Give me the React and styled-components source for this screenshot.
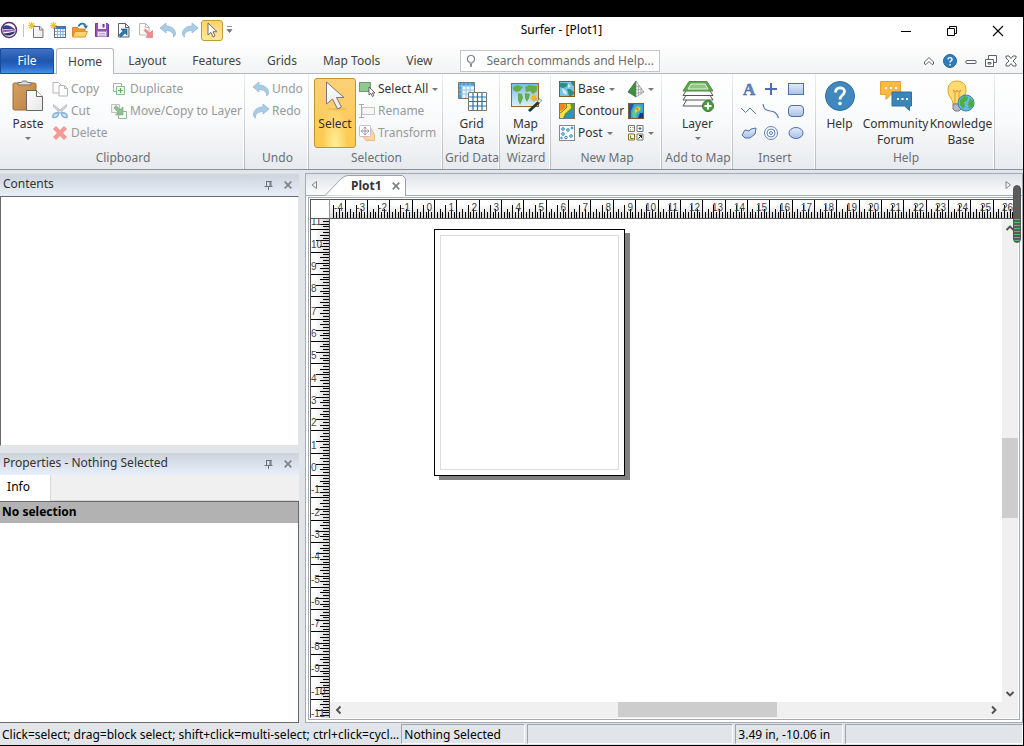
import React, { useLayoutEffect, useRef, useState } from "react";
import styled, { createGlobalStyle, css } from "styled-components";

const UI_FONT = `"Noto Sans", "Open Sans", sans-serif`;

/* ---------- icons ---------- */

const art = {
  logo: [18, <>
    <circle cx="9" cy="9" r="7.500" fill="#fff" stroke="#5b2c77" strokeWidth="1.500" />
    <path d="M3 5.500C6 3 11 4 15.500 9.200 11 8 7 7.500 3 8.500z" fill="#3b3f8f" />
    <path d="M2.500 9.500C7 8 11 8.500 15.500 10 11 10.200 6 11 3 11.500z" fill="#a05fb0" />
    <path d="M3 12.500c4-.2 8-1.200 12.300-2.200C14 14 7 16.500 3 12.500z" fill="#2d336f" />
  </>],
  newPlot: [16, <>
    <path d="M5.500 4.500h6.500l3 3v8h-9.500z" fill="url(#paper)" stroke="#777" />
    <path d="M11.500 4.500v3.500h3.500" fill="none" stroke="#777" />
    <path d="M3.500 0v7M0 3.500h7M1 1l5 5M6 1L1 6" stroke="#e8c51f" strokeWidth="1.200" />
  </>],
  newSheet: [16, <>
    <rect x="4.500" y="4.500" width="11" height="11" fill="#fff" stroke="#55708c" />
    <path d="M5 5h10v2H5z" fill="#3d7cb5" />
    <path d="M5 9.500h10M5 12.500h10M7.500 7v8M10.500 7v8M13 7v8" stroke="#7fb0dc" />
    <path d="M3.500 0v7M0 3.500h7M1 1l5 5M6 1L1 6" stroke="#e8c51f" strokeWidth="1.200" />
  </>],
  open: [16, <>
    <path d="M.5 14.500v-9h5l1.500 1.500h6v7.500z" fill="#e89b2c" stroke="#d8871b" />
    <path d="M.7 15l2.500-5.500h12.300L13 15z" fill="#ffd36e" stroke="#de9427" />
    <path d="M6.500 4.500C8 .8 12 .8 13.500 3.500" fill="none" stroke="#2372b0" strokeWidth="1.800" />
    <path d="M11 3.500h5L14 7z" fill="#2372b0" />
  </>],
  save: [16, <>
    <path d="M1.500 1.500h12l1 1v12h-13z" fill="#9252b5" stroke="#713894" />
    <path d="M4 1h8v6H4z" fill="#f7f3fa" />
    <path d="M8.500 2h2v3.500h-2z" fill="#713894" />
    <path d="M3.500 9.500h9v5h-9z" fill="#eee4f3" stroke="#b991cf" />
    <path d="M5 11.500h6M5 13.200h6" stroke="#ad8ac1" strokeWidth=".7" />
  </>],
  importFile: [16, <>
    <path d="M2.500 1.500h7l3.500 3.500v10H2.500z" fill="url(#paper)" stroke="#59636c" />
    <path d="M9.500 1.500v4h3.500" fill="none" stroke="#59636c" />
    <path d="M5 7h6v6L9 11l-4 4-2-2 4-4z" fill="#2d77ae" stroke="#1c5a8b" strokeWidth=".6" />
  </>],
  exportFile: [16, <>
    <path d="M1.500 1.500h6l3.500 3.500v8H1.500z" fill="#fbfbfb" stroke="#b9b9b9" />
    <path d="M7.500 1.500v4H11" fill="none" stroke="#b9b9b9" />
    <path d="M6 8.500L7.500 7l4 4L14.500 8.500v7H8l2-3z" fill="#f08a8a" stroke="#dc7070" strokeWidth=".6" />
  </>],
  undo: [16, <>
    <path d="M0 6l6-5v3c5.500 0 9.500 3 9.500 8-.3 1.500-1 2.500-2 3 .5-4-2.500-6.500-7.500-6.500V11z" fill="#a9cce5" stroke="#8ab5d6" strokeWidth=".7" />
  </>],
  redo: [16, <>
    <path d="M16 6l-6-5v3C4.500 4 .5 7 .5 12c.3 1.500 1 2.500 2 3-.5-4 2.500-6.500 7.500-6.500V11z" fill="#a9cce5" stroke="#8ab5d6" strokeWidth=".7" />
  </>],
  pointer: [16, <path d="M4 1v12l3-2.600 2 4.600 2-1-2-4.300h4z" fill="#fff" stroke="#6f6f6f" />],
  search: [14, <>
    <circle cx="7" cy="5" r="3.500" fill="#fff" stroke="#7a8087" strokeWidth="1.200" />
    <path d="M6 8.500L7 13l1-4.500" fill="#fff" stroke="#7a8087" />
  </>],
  copy: [16, <>
    <path d="M1 1.500h5.500l2.500 2.500v8H1z" fill="#fcfcfc" stroke="#b7b7b7" />
    <path d="M7 4.500h5.500l3 3v7.500H7z" fill="#fcfcfc" stroke="#b7b7b7" />
    <path d="M12.500 4.500v3h3" fill="none" stroke="#b7b7b7" />
  </>],
  cut: [16, <>
    <path d="M1.500 1.500l10 8.500-1.300 1.500L1.500 4zM14.500 1.500l-10 8.500 1.300 1.500L14.500 4z" fill="#cfd2d5" stroke="#adb1b5" strokeWidth=".6" />
    <path d="M1 14.500c-1-3 2-5 5.500-4.500.5 2.500-2 5-5.500 4.500zM15 14.500c1-3-2-5-5.500-4.500-.5 2.500 2 5 5.500 4.500z" fill="#d9eafa" stroke="#86b3dc" strokeWidth="1.600" />
  </>],
  remove: [16, <path d="M1.500 4l2.500-2.500 4 4 4-4L14.500 4l-4 4 4 4-2.500 2.500-4-4-4 4L1.500 12l4-4z" fill="#f59a94" stroke="#e98079" strokeWidth=".7" />],
  duplicate: [16, <>
    <path d="M2.500 10.500v-8h8v3M2.500 10.500h3" fill="none" stroke="#b0b0b0" />
    <path d="M5.500 5.500h8v8h-8z" fill="#f3faf2" stroke="#8cbd8a" />
    <path d="M9.500 7v5M7 9.500h5" stroke="#65aa62" strokeWidth="1.200" />
  </>],
  moveLayer: [16, <>
    <path d="M.5 1.500h8v8h-8z" fill="#f2f2f2" stroke="#c2c2c2" />
    <path d="M9.500 8.500h6v7h-8v-3" fill="#fff" stroke="#8cbd8a" />
    <path d="M3 5l2-2.500L9 6.500 12 4v8H4.500L7 9z" fill="#91be91" stroke="#73a773" strokeWidth=".6" />
  </>],
  selectAll: [16, <>
    <rect x=".5" y="1.500" width="11" height="9" fill="#90c990" stroke="#244a24" strokeDasharray="1 1" />
    <path d="M10 6v8l2-1.700 1.300 3.200 1.500-.8-1.300-2.700H16z" fill="#fff" stroke="#444" strokeWidth=".8" />
  </>],
  rename: [16, <>
    <path d="M3 4.500h12.500v7H3z" fill="#f7f7f7" stroke="#c3c3c3" />
    <path d="M0 1.500h5M0 14.500h5M2.500 1.500v13" fill="none" stroke="#aaa" />
  </>],
  transform: [16, <>
    <path d="M12 3.500l3.500 6v6H7l-3-4z" fill="#ffd6a3" stroke="#edb978" />
    <rect x=".5" y=".5" width="11" height="11" rx="1" fill="#fff" stroke="#c1c1c1" />
    <path d="M6 2v8M2 6h8M4.500 3.500L6 2l1.500 1.500M4.500 8.500L6 10l1.500-1.500M3.500 4.500L2 6l1.500 1.500M8.500 4.500L10 6 8.500 7.500" fill="none" stroke="#999" />
  </>],
  base: [16, <>
    <rect x=".5" y=".5" width="15" height="15" fill="#74c3ea" stroke="#875a2a" />
    <path d="M1 2h6l2 1-2 3-3 1-3-1zM8 8h3l4 3v2l-3 2h-2l-1-4zM12 1h3v4l-2-1z" fill="#2f8f70" />
    <path d="M3 7l4 3 1 4-4-2zM9 3l3 2-3 2z" fill="#d5f0f8" />
  </>],
  contour: [16, <>
    <rect x=".5" y=".5" width="15" height="15" fill="#2c8fd0" stroke="#777" />
    <path d="M1 1h13v5l-6 5-3 4H1z" fill="#6cc04a" />
    <path d="M1 1h10l1 4-6 5-2 5H1z" fill="#fddf3d" />
    <path d="M1 1h5l1 3-3 3-3 1z" fill="#f0851f" />
    <path d="M7 1l1 3-4 4-3 2M13 1l0 5-6 5-2 4" fill="none" stroke="#50602a" strokeWidth=".8" />
  </>],
  post: [16, <>
    <rect x=".5" y=".5" width="15" height="15" fill="#fff" stroke="#888" />
    <g fill="none" stroke="#257eb8">
      <circle cx="4" cy="4" r="1.300" /><circle cx="9" cy="5" r="1.300" /><circle cx="13" cy="3" r="1" />
      <circle cx="4" cy="9" r="1.300" /><circle cx="7" cy="12.500" r="1.300" /><circle cx="12" cy="11" r="1.300" /><circle cx="2.500" cy="13" r=".8" />
    </g>
  </>],
  surface: [16, <>
    <path d="M8 0L0 11l8 5z" fill="#3f9140" stroke="#246a2a" strokeWidth=".7" />
    <path d="M8 0l8 11-8 5z" fill="#f5f5f5" stroke="#8d8d8d" strokeWidth=".7" />
    <path d="M8 5l4 1M8 9l6-1M8 12.500l8-2M10.500 4v10.500M13 7v6" stroke="#999" strokeWidth=".7" />
  </>],
  colorRelief: [16, <>
    <rect x=".5" y=".5" width="15" height="15" fill="#3f9fd4" stroke="#875a2a" />
    <path d="M1 1h5L3 8v7H1z" fill="#2656a1" />
    <path d="M5 15c-2-5 0-10 4-12s5 2 4 4-4 2-5 8z" fill="#63c58d" />
    <path d="M7 9c0-5 5-6 5-3 0 2-4 1-5 5z" fill="#eadc42" />
    <circle cx="9.500" cy="6" r="1.300" fill="#ed7e27" />
    <path d="M12 10h3v5h-5z" fill="#173b82" />
  </>],
  specialty: [16, <>
    <g fill="#fff" stroke="#777">
      <path d="M.5.5h6v6h-6zM9 .5h6v6H9zM9 9h6v6H9z" />
      <path d="M.5 9h6v6h-6z" stroke="#9a651e" />
    </g>
    <path d="M2 2h1v1H2zM4.500 2h1v1h-1zM2 4.500h1v1H2z" fill="#4b8e36" />
    <path d="M4.500 4.500h1v1h-1z" fill="#ea8e19" />
    <path d="M12 2v3M10.500 3.500h3" stroke="#3d66a5" />
    <path d="M2.500 10.500v3h3" fill="none" stroke="#479149" />
    <path d="M10.500 13.500l3-3M11 10.500h2.500V13" fill="none" stroke="#222" />
  </>],
  text: [16, <text x="2" y="14" fontFamily="Liberation Serif, serif" fontWeight="bold" fontSize="17" fill="#6587c0" stroke="#3b61a4" strokeWidth=".5">A</text>],
  plus: [16, <path d="M8 2v12M2 8h12" stroke="#4e6fa9" strokeWidth="2" />],
  rect: [16, <rect x=".5" y="2.500" width="15" height="11" fill="url(#shape)" stroke="#4e6fa9" />],
  zigzag: [16, <path d="M0 5l4.500 4.500L9 5l6 6" fill="none" stroke="#5577ae" />],
  spline: [16, <path d="M0 1c1 6 3 6 7 7 4 0 7 2 8.500 7" fill="none" stroke="#5577ae" strokeWidth="1.200" />],
  roundRect: [16, <rect x=".5" y="2.500" width="15" height="11" rx="3.500" fill="url(#shape)" stroke="#4e6fa9" />],
  polygon: [16, <path d="M1 10l3-5 4 1 2-2 5-1-1 6-5 4H4z" fill="url(#shape)" stroke="#4e6fa9" />],
  target: [16, <g fill="none" stroke="#6486bd"><circle cx="8" cy="8" r="6.500" /><circle cx="8" cy="8" r="4" /><circle cx="8" cy="8" r="1.500" /></g>],
  ellipse: [16, <ellipse cx="8" cy="8" rx="7" ry="5.500" fill="url(#shape)" stroke="#4e6fa9" />],
  paste: [32, <>
    <rect x="1" y="3" width="23" height="27" rx="1.500" fill="url(#board)" stroke="#9c6c30" />
    <path d="M6 5V2.500h3.500L10.500 1h4l1 1.500H19V5z" fill="#d8d8d8" stroke="#757575" />
    <path d="M14.500 10.500h10l6 6v14h-16z" fill="url(#paper)" stroke="#666" />
    <path d="M24.500 10.500v6h6" fill="#fff" stroke="#666" />
  </>],
  bigPointer: [32, <>
    <ellipse cx="18" cy="29" rx="10" ry="1.500" fill="#cf9b22" opacity=".3" />
    <path d="M7.500 2v22l6-5 5 10 4-2-5-9.500h7.500z" fill="url(#paper)" stroke="#777" />
  </>],
  gridData: [32, <>
    <path d="M2.500 2.500h16v16h-16z" fill="#eaf5fd" stroke="#777" />
    <path d="M3 3h15v3H3zM3 3h3v15H3z" fill="#4d9bd3" />
    <path d="M3 6h15M3 10h15M3 14h15M6 3v15M10 3v15M14 3v15" stroke="#8dc6ed" />
    <path d="M12.500 12.500h18v18h-18z" fill="#fff" stroke="#777" />
    <path d="M13 17h17M13 21.500h17M13 26h17M17 13v17M21.500 13v17M26 13v17" stroke="#2473aa" strokeWidth="1.200" />
  </>],
  mapWizard: [32, <>
    <rect x="1.500" y="3.500" width="27" height="23" fill="url(#sea)" stroke="#9b6428" />
    <path d="M3 7l4-2 6 2-3 4-4 1-3-2zM8 13l4 1 1 4-3 7-2-5zM15 7l4-2 8 1v5l-4 3-3-3-4 1zM15 13l5 1-1 4-2 4-2-4zM23 17l4 1-1 3z" fill="#66ad49" />
    <path d="M24 14v8M20 18h8M21.500 15.500l5 5M26.500 15.500l-5 5" stroke="#f5ae2a" strokeWidth="1.200" />
    <path d="M18 30l10-9 2 2-10 9z" fill="#303030" />
    <path d="M27 21l3-2.500 2 2-3 2.500z" fill="#ddd" stroke="#555" strokeWidth=".5" />
  </>],
  layer: [32, <>
    <path d="M7 16h18l6 10H1z" fill="#fafafa" stroke="#555" />
    <path d="M7 11h18l6 9H1z" fill="#fff" stroke="#555" />
    <path d="M7 6.500h18l6 9H1z" fill="#fff" stroke="#555" />
    <path d="M7 1.500h18l6 9.500H1z" fill="#5fa64d" stroke="#4b8f42" />
    <path d="M6 9L9 4h14l3 5z" fill="#8fc77d" stroke="#e7f5e3" />
    <circle cx="26" cy="26" r="5.500" fill="#4f9a41" stroke="#347b2f" />
    <path d="M26 22.500v7M22.500 26h7" stroke="#fff" strokeWidth="2" />
  </>],
  bigHelp: [32, <>
    <circle cx="16" cy="16" r="14.500" fill="#4089bf" stroke="#2d6c9f" />
    <path d="M11.500 12.500c0-6 9-6 9-1 0 4-4.500 3.500-4.500 8" fill="none" stroke="#fff" strokeWidth="2.700" />
    <circle cx="16" cy="23.500" r="1.800" fill="#fff" />
  </>],
  community: [32, <>
    <path d="M.5 1.500h20v13H11l-5 5v-5H.5z" fill="#f9b946" stroke="#e6a02b" />
    <path d="M5 8h2M10 8h2M15 8h2" stroke="#fff" strokeWidth="2" />
    <path d="M12 12h19.500v14h-2v4.500l-5-4.500H12z" fill="#3c85b8" stroke="#2c719f" />
    <path d="M17 19h2M21.500 19h2M26 19h2" stroke="#fff" strokeWidth="2" />
  </>],
  knowledge: [32, <>
    <path d="M8 24c0-5-5-7-5-14C3 4 7 1 12 1s9 3 9 9c0 7-5 9-5 14z" fill="#fddb70" stroke="#dfa226" />
    <path d="M10 23V13l-2-3 3 2 1-2 1 2 3-2-2 3v10" fill="none" stroke="#e5942d" />
    <path d="M8 24h8v5l-2 2h-4l-2-2z" fill="#b5bbc1" stroke="#757b82" />
    <circle cx="21" cy="23" r="8" fill="#65b9ea" stroke="#347fae" />
    <path d="M15 20l4-4 4 1-1 4-3 1 1 4-2 3-3-4zM25 18l3 3v5l-4 3-1-5z" fill="#4faf3c" />
  </>],
  help: [14, <>
    <circle cx="7" cy="7" r="6.500" fill="#2e7cb9" stroke="#23689e" />
    <path d="M5 5.500c0-2.500 4-2.500 4 0C9 7 7 6.700 7 8.500M7 10v1.500" fill="none" stroke="#fff" strokeWidth="1.400" />
  </>],
  collapse: [12, <path d="M1.500 7L6 2.500 10.500 7v2L9 9.500l-3-3-3 3L1.500 9z" fill="#fff" stroke="#5b6069" />],
  docMin: [12, <rect x="1" y="5.500" width="10" height="3" rx=".5" fill="#fff" stroke="#5b6069" />],
  docRestore: [12, <>
    <path d="M3.500.5h8v7h-8z" fill="#fff" stroke="#5b6069" />
    <path d="M.5 4.500h8v7h-8zM3 7.500h3v1.500H3z" fill="#fff" stroke="#5b6069" />
  </>],
  docClose: [12, <path d="M1 1h3l2 2.500L8 1h3v2L8 6l3 3v2H8L6 8.500 4 11H1V9l3-3-3-3z" fill="#fff" stroke="#5b6069" />],
  winMin: [12, <path d="M1 6.500h10" stroke="#000" />],
  winRestore: [12, <path d="M3.500 3.500v-2h7v7h-2M1.500 3.500h7v7h-7z" fill="none" stroke="#000" />],
  winClose: [12, <path d="M1 1l10 10M11 1L1 11" stroke="#000" strokeWidth="1.100" />],
  pin: [10, <path d="M3.500 1v5M8 1v5M3 1.500h5.500M7 1v5M1.500 6.500h8M5.500 7v3" fill="none" stroke="#6d7075" />],
  cross: [10, <path d="M1.700 1.700l6.600 6.600M8.300 1.700L1.700 8.300" stroke="#808388" strokeWidth="1.700" />],
  triLeft: [8, <path d="M5.500.5v7L1 4z" fill="none" stroke="#888" />],
  triRight: [8, <path d="M2 .5v7L6.500 4z" fill="none" stroke="#888" />],
  chevUp: [10, <path d="M1.500 7L5 3.500 8.500 7" fill="none" stroke="#505050" strokeWidth="1.900" />],
  chevDown: [10, <path d="M1.500 3L5 6.500 8.500 3" fill="none" stroke="#505050" strokeWidth="1.900" />],
  chevLeft: [10, <path d="M6.500 1.500L3 5l3.500 3.500" fill="none" stroke="#505050" strokeWidth="1.900" />],
  chevRight: [10, <path d="M3 1.500L6.500 5 3 8.500" fill="none" stroke="#505050" strokeWidth="1.900" />],
  qatMenu: [8, <path d="M1 .5h5M1 3.500h5L3.500 6.500z" fill="#777" stroke="#777" strokeWidth=".8" />],
};

const Svg = styled.svg`
  display: block;
  flex: none;
  overflow: visible;
`;

const Icon = ({ name }) => {
  const [size, shape] = art[name];
  return (
    <Svg width={size} height={size} viewBox={`0 0 ${size} ${size}`} aria-hidden="true">
      {shape}
    </Svg>
  );
};

const Gradients = () => (
  <HiddenSvg aria-hidden="true">
    <defs>
      <linearGradient id="paper" x1="0" y1="0" x2="1" y2="1">
        <stop offset="0" stopColor="#ffffff" />
        <stop offset="1" stopColor="#e6e6e6" />
      </linearGradient>
      <linearGradient id="shape" x1="0" y1="0" x2="0" y2="1">
        <stop offset="0" stopColor="#e4ecf9" />
        <stop offset="1" stopColor="#a9c0e6" />
      </linearGradient>
      <linearGradient id="board" x1="0" y1="0" x2="1" y2="1">
        <stop offset="0" stopColor="#d5a263" />
        <stop offset="1" stopColor="#b98140" />
      </linearGradient>
      <linearGradient id="sea" x1="0" y1="0" x2="0" y2="1">
        <stop offset="0" stopColor="#7fbbe9" />
        <stop offset="1" stopColor="#d9f0fb" />
      </linearGradient>
    </defs>
  </HiddenSvg>
);

/* ---------- rulers ---------- */

const INCH = 22.35;
const tickLength = [19, 7, 10, 7, 14, 7, 10, 7];

// eighth-inch marks that fit between start and end, measured from origin
const marksBetween = (origin, start, end) => {
  const marks = [];
  const first = Math.ceil(((start - origin) * 8) / INCH);
  const last = Math.floor(((end - origin) * 8) / INCH);
  for (let i = first; i <= last; i++) {
    marks.push({ i, at: Math.round(origin + (i * INCH) / 8), len: tickLength[((i % 8) + 8) % 8] });
  }
  return marks;
};

const useSize = () => {
  const ref = useRef(null);
  const [size, setSize] = useState({ width: 0, height: 0 });

  useLayoutEffect(() => {
    const measure = () => {
      const box = ref.current.getBoundingClientRect();
      setSize({ width: box.width, height: box.height });
    };
    measure();
    window.addEventListener("resize", measure);
    return () => window.removeEventListener("resize", measure);
  }, []);

  return [ref, size];
};

const HorizontalRuler = () => {
  const [ref, { width }] = useSize();
  const marks = marksBetween(104, 1, width - 1);
  return (
    <TopRuler ref={ref}>
      <path d={marks.map((m) => `M${m.at}.5 19v-${m.len}`).join("")} stroke="#000" />
      {marks.filter((m) => m.i % 8 === 0).map((m) => (
        <text key={m.i} x={m.at - 2} y="11" textAnchor="end">{m.i / 8}</text>
      ))}
    </TopRuler>
  );
};

const VerticalRuler = () => {
  const [ref, { height }] = useSize();
  const marks = marksBetween(256, 1, height - 1);
  return (
    <SideRuler ref={ref}>
      <path d={marks.map((m) => `M19 ${m.at}.5h-${m.len}`).join("")} stroke="#000" />
      {marks.filter((m) => m.i % 8 === 0).map((m) => (
        <text key={m.i} x="0" y={m.at - 4}>{-m.i / 8}</text>
      ))}
      <text x="0" y={Math.round(256 + 11 * INCH) - 4}>-11</text>
    </SideRuler>
  );
};

/* ---------- ribbon pieces ---------- */

const Small = ({ icon, label, disabled, menu }) => (
  <SmallButton disabled={disabled} aria-label={label || icon}>
    <Icon name={icon} />
    {label && <span>{label}</span>}
    {menu && <Caret />}
  </SmallButton>
);

const Large = ({ icon, lines, width, menu, active }) => (
  <LargeButton $width={width} $active={active}>
    <Icon name={icon} />
    <LargeText>
      {lines.map((line) => (
        <span key={line}>{line}</span>
      ))}
      {menu && <Caret />}
    </LargeText>
  </LargeButton>
);

const Group = ({ title, width, pad, children }) => (
  <RibbonGroup $width={width}>
    <GroupBody $pad={pad}>{children}</GroupBody>
    <GroupTitle>{title}</GroupTitle>
  </RibbonGroup>
);

const quickTools = ["newPlot", "newSheet", "open", "save", "importFile", "exportFile", "undo", "redo"];
const tabs = ["Home", "Layout", "Features", "Grids", "Map Tools", "View"];
const insertTools = ["text", "plus", "rect", "zigzag", "spline", "roundRect", "polygon", "target", "ellipse"];

const PanelHeader = ({ title }) => (
  <PanelBar>
    <PanelTitle>{title}</PanelTitle>
    <IconButton aria-label="Auto hide"><Icon name="pin" /></IconButton>
    <IconButton aria-label="Close panel"><Icon name="cross" /></IconButton>
  </PanelBar>
);

const App = () => {
  const [tab, setTab] = useState("Home");

  return (
    <Window>
      <GlobalStyle />
      <Gradients />

      <TitleBar>
        <QuickAccess>
          <Icon name="logo" />
          <QuickDivider />
          {quickTools.map((name) => (
            <QuickButton key={name} aria-label={name}><Icon name={name} /></QuickButton>
          ))}
          <QuickButton $active aria-label="pointer"><Icon name="pointer" /></QuickButton>
          <IconButton aria-label="Customize"><Icon name="qatMenu" /></IconButton>
        </QuickAccess>
        <Title>Surfer - [Plot1]</Title>
        <WindowButtons>
          <WindowButton aria-label="Minimize"><Icon name="winMin" /></WindowButton>
          <WindowButton aria-label="Restore"><Icon name="winRestore" /></WindowButton>
          <WindowButton aria-label="Close"><Icon name="winClose" /></WindowButton>
        </WindowButtons>
      </TitleBar>

      <TabBar>
        <FileTab>File</FileTab>
        {tabs.map((name) => (
          <Tab key={name} $active={name === tab} onClick={() => setTab(name)}>{name}</Tab>
        ))}
        <SearchBox>
          <Icon name="search" />
          <SearchInput aria-label="Search" placeholder="Search commands and Help..." />
        </SearchBox>
        <DocButtons>
          <IconButton aria-label="Collapse ribbon"><Icon name="collapse" /></IconButton>
          <IconButton aria-label="Help"><Icon name="help" /></IconButton>
          <IconButton aria-label="Minimize plot"><Icon name="docMin" /></IconButton>
          <IconButton aria-label="Restore plot"><Icon name="docRestore" /></IconButton>
          <IconButton aria-label="Close plot"><Icon name="docClose" /></IconButton>
        </DocButtons>
      </TabBar>

      <Ribbon>
        <Group title="Clipboard" width={245} pad={6}>
          <Large icon="paste" lines={["Paste"]} width={44} menu />
          <Stack $width={59} $indent={2}>
            <Small icon="copy" label="Copy" disabled />
            <Small icon="cut" label="Cut" disabled />
            <Small icon="remove" label="Delete" disabled />
          </Stack>
          <Stack>
            <Small icon="duplicate" label="Duplicate" disabled />
            <Small icon="moveLayer" label="Move/Copy to Layer" disabled />
          </Stack>
        </Group>
        <Group title="Undo" width={64} pad={8}>
          <Stack>
            <Small icon="undo" label="Undo" disabled />
            <Small icon="redo" label="Redo" disabled />
          </Stack>
        </Group>
        <Group title="Selection" width={134} pad={5}>
          <Large icon="bigPointer" lines={["Select"]} width={42} active />
          <Stack $indent={3}>
            <Small icon="selectAll" label="Select All" menu />
            <Small icon="rename" label="Rename" disabled />
            <Small icon="transform" label="Transform" disabled />
          </Stack>
        </Group>
        <Group title="Grid Data" width={57} pad={0}>
          <Large icon="gridData" lines={["Grid", "Data"]} width={57} />
        </Group>
        <Group title="Wizard" width={51} pad={0}>
          <Large icon="mapWizard" lines={["Map", "Wizard"]} width={51} />
        </Group>
        <Group title="New Map" width={111} pad={8}>
          <Stack $width={69}>
            <Small icon="base" label="Base" menu />
            <Small icon="contour" label="Contour" />
            <Small icon="post" label="Post" menu />
          </Stack>
          <Stack>
            <Small icon="surface" menu />
            <Small icon="colorRelief" />
            <Small icon="specialty" menu />
          </Stack>
        </Group>
        <Group title="Add to Map" width={71} pad={0}>
          <Large icon="layer" lines={["Layer"]} width={71} menu />
        </Group>
        <Group title="Insert" width={83} pad={8}>
          <ToolGrid>
            {insertTools.map((name) => (
              <Small key={name} icon={name} />
            ))}
          </ToolGrid>
        </Group>
        <Group title="Help" width={179} pad={0}>
          <Large icon="bigHelp" lines={["Help"]} width={47} />
          <Large icon="community" lines={["Community", "Forum"]} width={65} />
          <Large icon="knowledge" lines={["Knowledge", "Base"]} width={66} />
        </Group>
      </Ribbon>

      <Workspace>
        <SideColumn>
          <ContentsPanel>
            <PanelHeader title="Contents" />
            <ContentsTree />
          </ContentsPanel>
          <Panel>
            <PanelHeader title="Properties - Nothing Selected" />
            <PropertyTabs>
              <PropertyTab>Info</PropertyTab>
            </PropertyTabs>
            <PropertyList>
              <PropertyHeading>No selection</PropertyHeading>
            </PropertyList>
          </Panel>
        </SideColumn>

        <Document>
          <DocTabBar>
            <IconButton aria-label="Previous"><Icon name="triLeft" /></IconButton>
            <DocTab>
              <DocTabShape viewBox="0 0 82 21" aria-hidden="true">
                <path d="M0 20.500L17 3Q20 .5 23 .5H77.500l3 3V21" fill="#fff" stroke="#9aa1aa" />
              </DocTabShape>
              <DocTabName>Plot1</DocTabName>
              <IconButton aria-label="Close Plot1"><Icon name="cross" /></IconButton>
            </DocTab>
            <NextButton aria-label="Next"><Icon name="triRight" /></NextButton>
          </DocTabBar>
          <DocFrame>
            <RulerCorner />
            <HorizontalRuler />
            <VerticalRuler />
            <Canvas>
              <Page />
            </Canvas>
            <VScroll>
              <IconButton aria-label="Scroll up"><Icon name="chevUp" /></IconButton>
              <VTrack><VThumb /></VTrack>
              <IconButton aria-label="Scroll down"><Icon name="chevDown" /></IconButton>
            </VScroll>
            <HScroll>
              <IconButton aria-label="Scroll left"><Icon name="chevLeft" /></IconButton>
              <HTrack><HThumb /></HTrack>
              <IconButton aria-label="Scroll right"><Icon name="chevRight" /></IconButton>
            </HScroll>
          </DocFrame>
          <LevelMeter />
        </Document>
      </Workspace>

      <StatusBar>
        <StatusHint>Click=select; drag=block select; shift+click=multi-select; ctrl+click=cycl...</StatusHint>
        <StatusCell $width={124}>Nothing Selected</StatusCell>
        <StatusCell $width={206} />
        <StatusCell $width={108}>3.49 in, -10.06 in</StatusCell>
        <StatusCell $grow />
      </StatusBar>
    </Window>
  );
};

const GlobalStyle = createGlobalStyle`
  * {
    box-sizing: border-box;
  }

  body {
    margin: 0;
    overflow: hidden;
  }

  button, input {
    font: inherit;
    color: inherit;
    border: 0;
    padding: 0;
    background: none;
  }
`;

const HiddenSvg = styled.svg`
  position: absolute;
  width: 0;
  height: 0;
`;

const Window = styled.div`
  display: flex;
  flex-direction: column;
  height: 100vh;
  border: solid #000;
  border-width: 17px 1px 1px 0;
  background: #e1e5e9;
  font-family: ${UI_FONT};
  font-size: 12px;
  line-height: 16px;
  color: #333;
  white-space: nowrap;
`;

const IconButton = styled.button`
  display: flex;
  align-items: center;
  justify-content: center;
`;

const TitleBar = styled.header`
  display: grid;
  grid-template-columns: 1fr auto 1fr;
  align-items: center;
  height: 30px;
  padding-bottom: 2px;
  background: #fff;
`;

const QuickAccess = styled.div`
  display: flex;
  align-items: center;
  height: 24px;
  margin-bottom: 2px;
`;

const QuickDivider = styled.div`
  width: 1px;
  height: 13px;
  margin: 0 1px 0 5px;
  background: #c3c3c3;
`;

const QuickButton = styled.button`
  display: flex;
  align-items: center;
  justify-content: center;
  width: 22px;
  height: 21px;
  border: 1px solid transparent;
  border-radius: 3px;

  ${(p) =>
    p.$active &&
    css`
      margin-right: 3px;
      border-color: #c29b32;
      background: linear-gradient(#fdd46c, #fee79b);
    `}
`;

const Title = styled.h1`
  margin: 0 0 2px 100px;
  font-size: 12px;
  font-weight: normal;
  color: #000;
`;

const WindowButtons = styled.div`
  display: flex;
  justify-content: flex-end;
`;

const WindowButton = styled(IconButton)`
  width: 46px;
  height: 28px;

  &:last-child {
    margin-right: 2px;
  }
`;

const TabBar = styled.nav`
  display: flex;
  align-items: stretch;
  height: 27px;
  padding-top: 1px;
  background: linear-gradient(#fdfdfd, #f2f3f4);
  box-shadow: inset 0 -1px #b5b8bd;
`;

const FileTab = styled.button`
  width: 54px;
  margin-right: 2px;
  border: 1px solid #1d4b9c;
  border-radius: 0 3px 0 0;
  background: linear-gradient(#3f72c4, #1f55ae 50%, #2b6ac8 75%, #4292e4);
  color: #fff;
`;

const Tab = styled.button`
  padding: 0 13px;
  color: #444;

  ${(p) =>
    p.$active &&
    css`
      padding: 0 11px;
      margin-right: 1px;
      border: 1px solid #b5b8bd;
      border-bottom: 0;
      border-radius: 3px 3px 0 0;
      background: #fff;
    `}
`;

const SearchBox = styled.label`
  display: flex;
  align-items: center;
  width: 200px;
  height: 22px;
  margin: 2px 0 0 14px;
  padding-left: 3px;
  border: 1px solid #c3c6ca;
  background: #fff;
`;

const SearchInput = styled.input`
  flex: 1;
  min-width: 0;
  margin-left: 9px;
  outline: 0;

  &::placeholder {
    color: #6d6d6d;
    opacity: 1;
  }
`;

const DocButtons = styled.div`
  display: flex;
  align-items: center;
  gap: 8px;
  margin-left: auto;
  padding-right: 6px;
`;

const Ribbon = styled.section`
  display: flex;
  flex: none;
  border-bottom: 1px solid #8b9097;
  background: linear-gradient(#fff, #f9fafb 50%, #e7eaee);
`;

const RibbonGroup = styled.div`
  display: flex;
  flex: none;
  flex-direction: column;
  width: ${(p) => p.$width}px;
  padding-top: 4px;
  border-right: 1px solid;
  border-image: linear-gradient(#eceef0, #b4b9bf) 1;
  box-shadow: inset -1px 0 #fff;
`;

const GroupBody = styled.div`
  display: flex;
  height: 70px;
  padding-left: ${(p) => p.$pad}px;
`;

const GroupTitle = styled.div`
  padding: 2px 0 3px 2px;
  text-align: center;
  color: #6a6f76;
`;

const Stack = styled.div`
  display: flex;
  flex: none;
  flex-direction: column;
  align-items: flex-start;
  width: ${(p) => (p.$width ? `${p.$width}px` : "auto")};
  margin-left: ${(p) => p.$indent || 0}px;
`;

const SmallButton = styled.button`
  display: flex;
  align-items: center;
  gap: 3px;
  height: 22px;

  &:disabled {
    color: #999;
  }
`;

const Caret = styled.i`
  width: 5px;
  margin-left: 1px;
  border: solid transparent;
  border-width: 3px 3px 0;
  border-top-color: #777;
`;

const LargeButton = styled.button`
  display: flex;
  flex: none;
  flex-direction: column;
  align-items: center;
  gap: 4px;
  width: ${(p) => p.$width}px;
  padding-top: 2px;

  ${(p) =>
    p.$active &&
    css`
      padding-top: 1px;
      border: 1px solid #c2942c;
      border-radius: 3px;
      background: radial-gradient(ellipse at 50% 100%, #fff09a, transparent 45%), linear-gradient(#fbd077, #fdc94f);
    `}
`;

const LargeText = styled.span`
  display: flex;
  flex-direction: column;
  align-items: center;

  ${Caret} {
    margin: 5px 0 0;
  }
`;

const ToolGrid = styled.div`
  display: grid;
  grid-template-columns: 22px 25px 16px;
  grid-auto-rows: 22px;
`;

const Workspace = styled.main`
  display: flex;
  flex: 1;
  gap: 6px;
  min-height: 0;
  padding: 3px 0 1px;
`;

const SideColumn = styled.aside`
  display: flex;
  flex: none;
  flex-direction: column;
  gap: 7px;
  width: 299px;
  padding-top: 1px;
`;

const Panel = styled.section`
  display: flex;
  flex: 1;
  flex-direction: column;
`;

const ContentsPanel = styled(Panel)`
  flex-basis: 2px;
`;

const PanelBar = styled.div`
  display: flex;
  align-items: center;
  gap: 10px;
  height: 22px;
  padding: 0 6px 0 3px;
  background: linear-gradient(#ccd3dc, #e8eff9);
`;

const PanelTitle = styled.h2`
  flex: 1;
  margin: 0 0 2px;
  font-size: 12px;
  font-weight: normal;
`;

const ContentsTree = styled.div`
  flex: 1;
  border: 1px solid #696969;
  border-right-color: #e3e3e3;
  border-bottom-color: #e3e3e3;
  background: #fff;
`;

const PropertyTabs = styled.div`
  display: flex;
  height: 26px;
  border-bottom: 1px solid #d9d9d9;
  background: #f0f0f0;
`;

const PropertyTab = styled.button`
  width: 51px;
  margin-bottom: -1px;
  padding: 0 20px 2px 7px;
  border-right: 1px solid #d9d9d9;
  background: #fff;
  color: #000;
`;

const PropertyList = styled.div`
  flex: 1;
  border: solid #696969;
  border-width: 1px 1px 1px 0;
  background: #fff;
`;

const PropertyHeading = styled.div`
  height: 21px;
  padding: 2px;
  background: #b2b2b2;
  color: #000;
  font-weight: bold;
`;

const Document = styled.section`
  position: relative;
  display: flex;
  flex: 1;
  flex-direction: column;
  min-width: 0;
  border: 1px solid #a3aab4;
  background: #fff;
`;

const DocTabBar = styled.div`
  display: flex;
  align-items: flex-end;
  height: 22px;
  padding: 0 8px 0 3px;
  border-bottom: 1px solid #a3aab4;
  background: linear-gradient(#dfe3e9, #fbfcfd);

  > ${IconButton} {
    height: 20px;
    width: 12px;
  }
`;

const DocTab = styled.div`
  position: relative;
  display: flex;
  align-items: center;
  gap: 9px;
  width: 82px;
  height: 21px;
  margin: 0 0 -1px 4px;
  padding-left: 26px;
  color: #333;
  font-weight: bold;
`;

const DocTabShape = styled.svg`
  position: absolute;
  inset: 0;
`;

const DocTabName = styled.span`
  position: relative;

  & + ${IconButton} {
    position: relative;
  }
`;

const NextButton = styled(IconButton)`
  margin-left: auto;
`;

const DocFrame = styled.div`
  display: grid;
  flex: 1;
  grid-template-columns: 20px 1fr 16px;
  grid-template-rows: 20px 1fr 16px;
  min-height: 0;
  margin: 1px 2px 2px;
  padding: 1px;
  border: 1px solid #a3aab4;
`;

const RulerCorner = styled.div`
  border: 1px solid #555;
  border-right-color: #999;
  background: #fff;
`;

const rulerText = css`
  font: 10px "Liberation Sans", Arial, sans-serif;
  fill: #444;
`;

const TopRuler = styled.svg`
  grid-column: 2 / 4;
  width: 100%;
  height: 20px;
  border: solid #555;
  border-width: 1px 0;
  background: linear-gradient(#fff 25%, #d5d5d5);
  ${rulerText}
`;

const SideRuler = styled.svg`
  grid-row: 2 / 4;
  width: 20px;
  height: 100%;
  border: solid #555;
  border-width: 0 1px;
  background: linear-gradient(90deg, #fff 25%, #d0d0d0);
  ${rulerText}
`;

const Canvas = styled.div`
  position: relative;
  overflow: hidden;
`;

const Page = styled.div`
  position: absolute;
  left: 104px;
  top: 10px;
  width: 191px;
  height: 247px;
  border: 1px solid #000;
  box-shadow: 5px 4px #808080;
  background: #fff;

  &::after {
    content: "";
    position: absolute;
    inset: 5px;
    border: 1px solid #dcdcdc;
  }
`;

const VScroll = styled.div`
  display: flex;
  flex-direction: column;
  background: #f0f0f0;

  ${IconButton} {
    height: 17px;
  }
`;

const VTrack = styled.div`
  flex: 1;
  padding-top: 202px;
`;

const VThumb = styled.div`
  height: 80px;
  background: #cdcdcd;
`;

const HScroll = styled.div`
  display: flex;
  grid-column: 2 / 4;
  padding-right: 16px;
  background: #f0f0f0;

  ${IconButton} {
    width: 17px;
  }
`;

const HTrack = styled.div`
  flex: 1;
  padding-left: 271px;
`;

const HThumb = styled.div`
  width: 159px;
  height: 15px;
  background: #cdcdcd;
`;

const LevelMeter = styled.div`
  position: absolute;
  right: 1px;
  top: 11px;
  width: 8px;
  height: 58px;
  border: 1px solid #555;
  border-radius: 4px;
  background: linear-gradient(#5c5c5c 32px, transparent 32px), repeating-linear-gradient(#43c46d 0 1px, #5c5c5c 1px 3px);
`;

const StatusBar = styled.footer`
  display: flex;
  gap: 2px;
  height: 21px;
  color: #000;
`;

const StatusHint = styled.div`
  flex: none;
  min-width: 393px;
  padding: 3px 0 0 2px;
`;

const StatusCell = styled.div`
  flex: ${(p) => (p.$grow ? "1" : "none")};
  width: ${(p) => (p.$grow ? "auto" : `${p.$width}px`)};
  height: 20px;
  padding: 2px 2px 0;
  border: 1px solid #a0a5ab;
  border-right-color: #fff;
  border-bottom-color: #fff;
`;

export default App;
